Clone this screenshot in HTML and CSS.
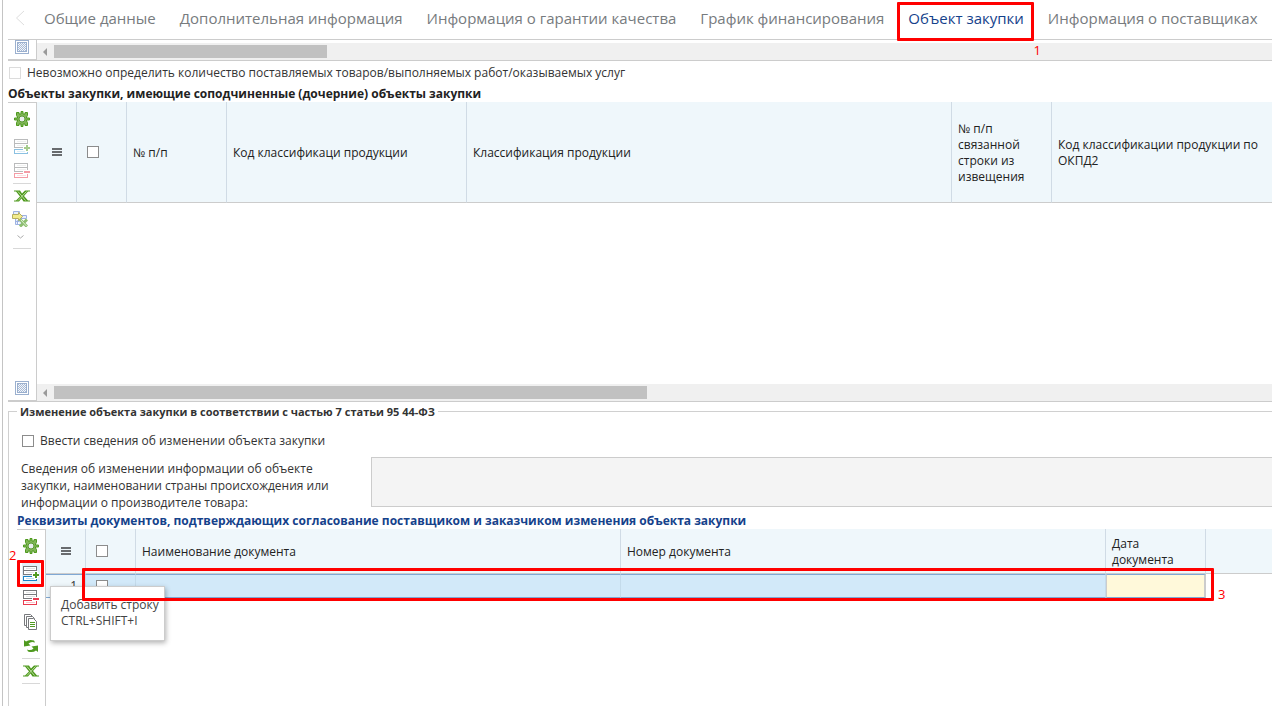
FILE: index.html
```html
<!DOCTYPE html>
<html lang="ru">
<head>
<meta charset="utf-8">
<title>Объект закупки</title>
<link rel="stylesheet" href="styles.css">
</head>
<body>
<svg class="sprite" aria-hidden="true">
  <symbol id="gear" viewBox="0 0 16 16">
    <path d="M7 0.500h2v2.500h2V1.500h2.500v3L12.500 6v1H15.500v2H12.500v1l1 1.500v3H11V13H9v2.500H7V13H5v1.500H2.500v-3l1-1.500V9H0.500V7h3V6l-1-1.500v-3H5V3h2z" fill="#7fb556" stroke="#4f9a1f"/>
    <circle cx="8" cy="8" r="3" fill="#e9eeee" stroke="#5a9a34"/>
  </symbol>
  <symbol id="row-add" viewBox="0 0 16 16">
    <g fill="#fff" stroke="#77797c" shape-rendering="crispEdges">
      <path d="M0.500 0.500h13v8h-13zM0.500 4.500h13"/>
      <path d="M3 2.500h9M3 6.500h9" stroke="#e3e4e5"/>
      <path d="M0.500 10.500h13v4h-13z" stroke="#1a84c7"/>
      <path d="M3 12.500h8" stroke="#bde0f2"/>
    </g>
    <path d="M13 5v8M9 9h8" stroke="#fff" stroke-width="4"/>
    <path d="M13 6v6M10 9h6" stroke="#4f9a1f" stroke-width="2"/>
  </symbol>
  <symbol id="row-del" viewBox="0 0 16 16">
    <g fill="#fff" stroke="#77797c" shape-rendering="crispEdges">
      <path d="M0.500 0.500h13v8h-13zM0.500 4.500h13"/>
      <path d="M3 2.500h9M3 6.500h9" stroke="#e3e4e5"/>
      <path d="M0.500 10.500h13v4h-13z" stroke="#ea3b50"/>
      <path d="M3 12.500h9" stroke="#f8c5cb"/>
    </g>
    <path d="M9 9h7" stroke="#fff" stroke-width="4"/>
    <path d="M10 9h6" stroke="#ea3b50" stroke-width="2"/>
  </symbol>
  <symbol id="excel" viewBox="0 0 16 12">
    <path d="M0 0.500h6l2 3 3-3h5v1h-2l-4 4.500 4 4.500h2v1H9.500L7.500 8.500 5 11.500H0v-1h2L6 6.500 2 1.500H0z" fill="#4f9a1f"/>
    <path d="M4 1.500l7.500 9M12.500 1.500L4 10.500" stroke="#b9dc9c" stroke-width="1"/>
  </symbol>
  <symbol id="export" viewBox="0 0 16 16">
    <g fill="#e8eefb" stroke="#9db2e2">
      <path d="M1.500 0.500h6v4h-6zM8.500 4.500h6v3h-6zM3.500 6v7.500H8M3.500 10.500h4M5.500 9.500h4v4h-4z"/>
    </g>
    <path d="M0.500 3.500h6v-2l4 4-4 4v-2h-6z" fill="#f2ec8d" stroke="#b5ae62"/>
    <path d="M8 8.500l7 7M15 8.500l-7 7" stroke="#8ebf70" stroke-width="3"/>
    <path d="M9 9l5.500 6" stroke="#dcefd0"/>
  </symbol>
  <symbol id="copy" viewBox="0 0 16 16">
    <g fill="#fff" stroke="#77797c">
      <path d="M1.500 11.500v-11h6l2 2v9z"/>
      <path d="M3.500 13.500v-11h6l2 2v9z"/>
      <path d="M5.500 15.500v-11h5l3 3v8z"/>
    </g>
    <path d="M7 8.500h5M7 10.500h5M7 12.500h5" stroke="#4f9a1f"/>
  </symbol>
  <symbol id="refresh" viewBox="0 0 16 14">
    <g fill="#4f9a1f">
      <path d="M1 1l2 1.500Q6 0 11 1.500L12 3.500Q8 2 5.500 4.500L7.500 6.500 1 7.500z"/>
      <path d="M15 13l-2-1.500Q10 14 5 12.500L4 10.500Q8 12 10.500 9.500L8.500 7.500 15 6.500z"/>
    </g>
  </symbol>
  <symbol id="pattern" viewBox="0 0 14 14">
    <g shape-rendering="crispEdges">
      <path d="M0.500 0.500h13v13h-13z" fill="#fff" stroke="#9bb0cf"/>
      <path d="M2.500 2.500h9v9h-9z" fill="#f3f6fa" stroke="#9bb0cf"/>
      <path d="M3 3.500h8M3 5.500h8M3 7.500h8M3 9.500h8" stroke="#a9bbd6" stroke-dasharray="1 1"/>
      <path d="M4 4.500h7M4 6.500h7M4 8.500h7M4 10.500h7" stroke="#a9bbd6" stroke-dasharray="1 1"/>
    </g>
  </symbol>
  <symbol id="menu" viewBox="0 0 10 8">
    <path d="M0 1h10M0 4h10M0 7h10" stroke="#686b6e" stroke-width="2" shape-rendering="crispEdges"/>
  </symbol>
</svg>

<div class="app">
  <nav class="tabs">
    <button class="tab-back" aria-label="Назад"><svg width="10" height="16" viewBox="0 0 10 16"><path d="M9 1L1.500 8 9 15" fill="none" stroke="#dedede"/></svg></button>
    <button class="tab">Общие данные</button>
    <button class="tab">Дополнительная информация</button>
    <button class="tab">Информация о гарантии качества</button>
    <button class="tab">График финансирования</button>
    <button class="tab tab-active">Объект закупки<span class="frame frame-tab"></span><span class="mark mark-tab">1</span></button>
    <button class="tab">Информация о поставщиках</button>
  </nav>

  <div class="strip">
    <div class="strip-side"><svg class="icon-pattern"><use href="#pattern"/></svg></div>
    <div class="scrollbar"><span class="arrow"></span><span class="thumb" style="width: 273px"></span></div>
  </div>

  <label class="check-row check-row-top"><input type="checkbox" disabled>Невозможно определить количество поставляемых товаров/выполняемых работ/оказываемых услуг</label>

  <h2 class="title">Объекты закупки, имеющие соподчиненные (дочерние) объекты закупки</h2>
  <section class="grid">
    <div class="toolbar">
      <button aria-label="Настройки"><svg class="icon"><use href="#gear"/></svg></button>
      <button class="faded spaced" aria-label="Добавить строку"><svg class="icon"><use href="#row-add"/></svg></button>
      <button class="faded" aria-label="Удалить строку"><svg class="icon"><use href="#row-del"/></svg></button>
      <hr>
      <button aria-label="Excel"><svg class="icon icon-low"><use href="#excel"/></svg></button>
      <button class="shifted" aria-label="Экспорт"><svg class="icon"><use href="#export"/></svg></button>
      <button class="more" aria-label="Ещё"><svg width="7" height="4" viewBox="0 0 7 4"><path d="M0.500 0.500l3 2.500 3-2.500" fill="none" stroke="#aaa"/></svg></button>
      <hr>
      <svg class="icon-pattern toolbar-end"><use href="#pattern"/></svg>
    </div>
    <div class="grid-main">
      <table class="table table-tall">
        <colgroup><col class="w-menu"><col class="w-check"><col class="w-small"><col class="w-code"><col class="w-wide"><col class="w-small"><col></colgroup>
        <thead><tr>
          <th class="center"><svg class="icon-menu"><use href="#menu"/></svg></th>
          <th class="check"><input type="checkbox" aria-label="Выбрать все"></th>
          <th>№ п/п</th>
          <th>Код классификаци продукции</th>
          <th>Классификация продукции</th>
          <th>№ п/п связанной строки из извещения</th>
          <th>Код классификации продукции по ОКПД2</th>
        </tr></thead>
      </table>
      <div class="grid-space"></div>
      <div class="scrollbar"><span class="arrow"></span><span class="thumb" style="width: 593px"></span></div>
    </div>
  </section>

  <fieldset class="changes">
    <legend>Изменение объекта закупки в соответствии с частью 7 статьи 95 44-ФЗ</legend>
    <label class="check-row check-row-inner"><input type="checkbox">Ввести сведения об изменении объекта закупки</label>
    <div class="field">
      <label for="info">Сведения об изменении информации об объекте закупки, наименовании страны происхождения или информации о производителе товара:</label>
      <textarea id="info" disabled></textarea>
    </div>
    <h2 class="title title-blue">Реквизиты документов, подтверждающих согласование поставщиком и заказчиком изменения объекта закупки</h2>
    <section class="grid grid-docs">
      <div class="toolbar">
        <button aria-label="Настройки"><svg class="icon"><use href="#gear"/></svg></button>
        <button class="spaced hovered" aria-label="Добавить строку"><svg class="icon"><use href="#row-add"/></svg><span class="frame frame-add"></span><span class="mark mark-add">2</span></button>
        <button aria-label="Удалить строку"><svg class="icon"><use href="#row-del"/></svg></button>
        <button aria-label="Копировать"><svg class="icon"><use href="#copy"/></svg></button>
        <button aria-label="Обновить"><svg class="icon icon-mid"><use href="#refresh"/></svg></button>
        <hr>
        <button aria-label="Excel"><svg class="icon icon-low"><use href="#excel"/></svg></button>
        <hr>
      </div>
      <div class="grid-main">
        <table class="table table-docs">
          <colgroup><col class="w-menu"><col class="w-check"><col class="w-wide"><col class="w-wide"><col class="w-small"><col></colgroup>
          <thead><tr>
            <th class="center"><svg class="icon-menu"><use href="#menu"/></svg></th>
            <th class="check"><input type="checkbox" aria-label="Выбрать все"></th>
            <th>Наименование документа</th>
            <th>Номер документа</th>
            <th>Дата документа</th>
            <th></th>
          </tr></thead>
          <tbody><tr>
            <td class="num">1</td>
            <td class="check"><input type="checkbox" aria-label="Строка 1"></td>
            <td></td>
            <td></td>
            <td class="date"></td>
            <td class="rest"></td>
          </tr></tbody>
        </table>
        <div class="tooltip" role="tooltip">Добавить строку<br>CTRL+SHIFT+I</div>
        <span class="frame frame-row"></span><span class="mark mark-row">3</span>
      </div>
    </section>
  </fieldset>
</div>
</body>
</html>
```
FILE: styles.css
```css
* { box-sizing: border-box; }
body {
  margin: 0;
  background: #fff;
  color: #333;
  font: 12px/16px "Open Sans", "Noto Sans", sans-serif;
  overflow: hidden;
}
button { border: 0; padding: 0; background: none; font: inherit; color: inherit; }
.sprite { position: absolute; width: 0; height: 0; }

.app {
  display: flex;
  flex-direction: column;
  min-height: 100vh;
  margin-left: 2px;
  padding-left: 5px;
  border-left: 1px solid #c4c4c4;
}

.tabs {
  display: flex;
  align-items: center;
  gap: 24px;
  height: 40px;
  padding: 0 0 3px 7px;
  border-bottom: 1px solid #ccc;
  white-space: nowrap;
}
.tab-back { width: 10px; height: 16px; margin-right: -5px; }
.tab-back svg { display: block; }
.tab { position: relative; flex: none; font-size: 15px; line-height: 20px; color: #777b7e; }
.tab-active { color: #15428b; }

.strip { display: flex; height: 21px; }
.strip-side {
  width: 29px;
  padding-left: 7px;
  border-right: 1px solid #ccc;
  border-bottom: 2px solid #ccc;
}
.icon-pattern { display: block; width: 14px; height: 14px; }
.strip .scrollbar { flex: 1; margin-top: 3px; }
.scrollbar {
  display: flex;
  align-items: center;
  height: 18px;
  padding-left: 6px;
  background: #f0f0f0;
  border-bottom: 1px solid #ccc;
}
.arrow {
  border: 4px solid transparent;
  border-left: 0;
  border-right-color: #9a9a9a;
  margin-right: 7px;
}
.thumb { height: 13px; background: #c1c1c1; }

input[type="checkbox"] {
  appearance: none;
  display: block;
  width: 12px;
  height: 12px;
  margin: 0;
  border: 1px solid #8c8c8c;
  background: #fff;
}
input[type="checkbox"]:disabled { border-color: #dcdcdc; }
.check-row { display: flex; align-items: center; gap: 6px; }
.check-row-top { height: 24px; padding-left: 1px; }

.title { margin: 0; padding-top: 1px; font-size: 12px; line-height: 16px; font-weight: 700; color: #222; }
.title-blue { padding-top: 2px; color: #15428b; }

.grid { display: flex; height: 300px; }
.toolbar {
  display: flex;
  flex-direction: column;
  flex: none;
  width: 29px;
  padding: 4px 0 5px 5px;
  border: solid #ccc;
  border-width: 1px 1px 2px 0;
}
.toolbar button { position: relative; display: flex; align-items: center; justify-content: center; width: 18px; height: 24px; }
.toolbar .spaced { margin-top: 4px; }
.toolbar .shifted { width: 14px; height: 22px; }
.toolbar .more { width: 14px; height: 14px; }
.toolbar .faded svg { opacity: 0.5; }
.toolbar hr { width: 18px; margin: 0; border: 0; border-top: 1px solid #d8d8d8; }
.toolbar .more + hr { margin-top: 4px; }
.toolbar-end { margin: auto 0 0 2px; }
.icon { display: block; flex: none; width: 16px; height: 16px; }
.icon-low { height: 12px; }
.icon-mid { height: 14px; }
.icon-menu { display: block; width: 10px; height: 8px; margin: auto; }
.grid-main { position: relative; display: flex; flex-direction: column; flex: 1; min-width: 0; }
.grid-space { flex: 1; }

.table { width: 100%; table-layout: fixed; border-collapse: separate; border-spacing: 0; }
.w-menu { width: 40px; }
.w-check { width: 50px; }
.w-small { width: 100px; }
.w-code { width: 240px; }
.w-wide { width: 485px; }
.table th {
  height: 45px;
  padding: 1px 6px 0;
  text-align: left;
  font-weight: 400;
  color: #222;
  background: #eff7fb;
  border-right: 1px solid #d0dbe5;
  border-bottom: 1px solid #ccc;
}
.table-tall th { height: 101px; }
.table th:last-child { border-right: 0; }
.table .center { padding: 0; }
.table .check { padding: 0 10px; }
.table td {
  height: 24px;
  padding: 0;
  background: #d2e9f9;
  border: solid #7fa8d4;
  border-width: 1px 0;
  border-right: 1px solid #c4dbeb;
}
.table .num { padding-right: 8px; text-align: right; background: #eff7fb; }
.table td.date { background: #fff9da; border-right: 2px solid #ccc; border-left: 1px solid #ccc; }
.table td.rest { background: none; border: 0; }

.changes {
  flex: 1;
  display: flex;
  flex-direction: column;
  min-width: 0;
  margin: 1px 0 0;
  padding: 0 0 0 8px;
  border: 1px solid #d0d0d0;
  border-right: 0;
  border-bottom: 0;
}
.changes legend { padding: 0 3px; font-size: 11px; line-height: 17px; font-weight: 700; color: #333; }
.check-row-inner { height: 24px; margin-top: 9px; padding-left: 5px; }
.field { display: flex; margin-top: 4px; padding-left: 4px; }
.field label { flex: none; width: 320px; margin: 3px 30px 0 0; line-height: 17px; }
.field textarea {
  flex: 1;
  min-width: 0;
  height: 50px;
  border: 1px solid #ccc;
  border-right: 0;
  background: #f4f4f4;
  resize: none;
}
.grid-docs { flex: 1; height: auto; min-height: 178px; }
.grid-docs .toolbar { border-bottom: 0; }
.hovered { background: #e3eef7; }

.tooltip {
  position: absolute;
  left: 4px;
  top: 57px;
  width: 115px;
  height: 55px;
  padding: 10px 0 0 10px;
  border: 1px solid #ccc;
  background: #fff;
  box-shadow: 1px 2px 5px rgba(0, 0, 0, 0.3);
  color: #444;
  white-space: nowrap;
}

.frame { position: absolute; border: 3px solid #f00; border-radius: 1px; }
.mark { position: absolute; color: #f00; font-size: 13px; line-height: 16px; }
.frame-tab { inset: -6px -10px -13px -11px; }
.mark-tab { right: -17px; top: 34px; }
.frame-add { inset: -2px -4px -1px -5px; }
.mark-add { left: -13px; top: -15px; }
.frame-row { left: 36px; top: 39px; width: 1132px; height: 33px; }
.mark-row { left: 1172px; top: 57px; }
```
